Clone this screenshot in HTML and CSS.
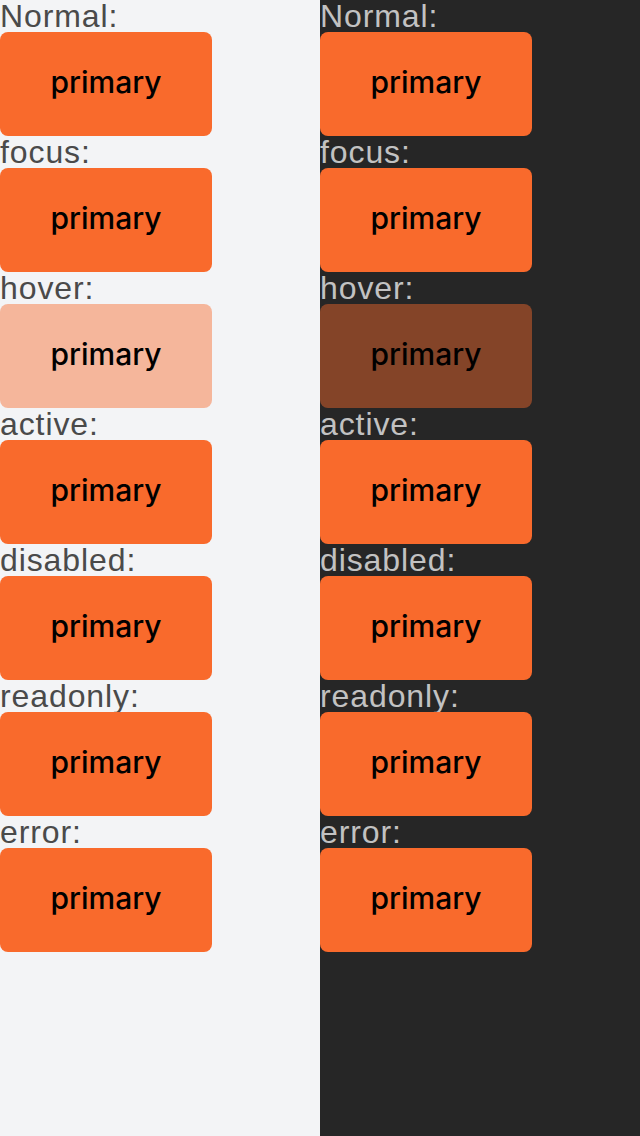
FILE: index.html
```html
<!DOCTYPE html>
<html>
<head>
<meta charset="utf-8">
<link rel="stylesheet" href="styles.css">
</head>
<body>
<div class="page">
  <div class="col light">
    <div class="label">Normal:</div><div class="btn">primary</div>
    <div class="label">focus:</div><div class="btn">primary</div>
    <div class="label">hover:</div><div class="btn hover">primary</div>
    <div class="label">active:</div><div class="btn">primary</div>
    <div class="label">disabled:</div><div class="btn">primary</div>
    <div class="label">readonly:</div><div class="btn">primary</div>
    <div class="label">error:</div><div class="btn">primary</div>
  </div>
  <div class="col dark">
    <div class="label">Normal:</div><div class="btn">primary</div>
    <div class="label">focus:</div><div class="btn">primary</div>
    <div class="label">hover:</div><div class="btn hover">primary</div>
    <div class="label">active:</div><div class="btn">primary</div>
    <div class="label">disabled:</div><div class="btn">primary</div>
    <div class="label">readonly:</div><div class="btn">primary</div>
    <div class="label">error:</div><div class="btn">primary</div>
  </div>
</div>
</body>
</html>
```
FILE: styles.css
```css
html, body { margin: 0; padding: 0; }
body { font-family: "Liberation Sans", Arial, sans-serif; }
.page { display: flex; width: 640px; height: 1136px; }
.col { width: 320px; height: 1136px; display: flex; flex-direction: column; align-items: flex-start; }
.light { background: #f3f4f6; color: #4a4a4a; }
.dark { background: #262626; color: #c2c2c2; }
.label { font-size: 32px; line-height: 32px; height: 32px; letter-spacing: 0.9px; }
.btn {
  width: 212px; height: 104px; border-radius: 8px;
  background: #f96a2c; color: #000;
  display: flex; align-items: center; justify-content: center;
  box-sizing: border-box; padding-bottom: 4px;
  font-family: Inter, "Liberation Sans", sans-serif;
  font-weight: 500; font-size: 30px;
}
.btn.hover { background: rgba(249, 106, 45, 0.45); }
```
